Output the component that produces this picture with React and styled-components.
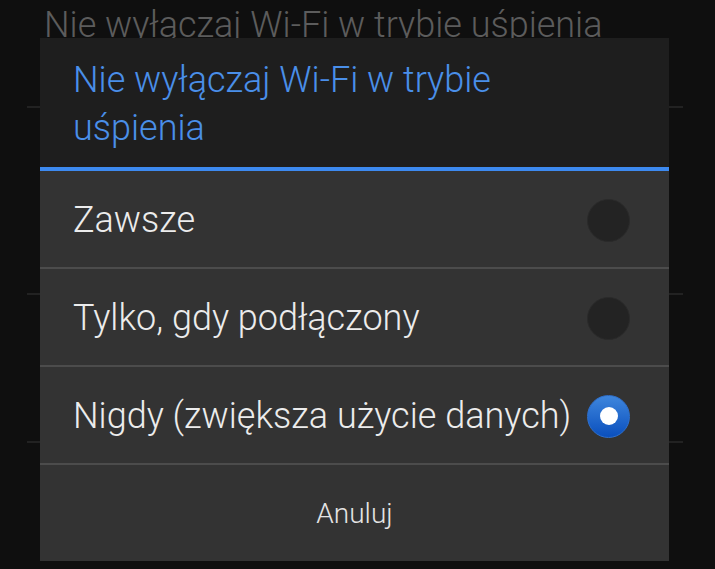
import React, { useState } from "react";
import styled, { createGlobalStyle } from "styled-components";

const Global = createGlobalStyle`
    html, body {
        margin: 0;
        padding: 0;
        background: #0f0f0f;
        font-family: Roboto, "Noto Sans", sans-serif;
    }
`;

const Screen = styled.div`
    position: relative;
    width: 715px;
    height: 569px;
    overflow: hidden;
    background: #0f0f0f;
`;

const BackList = styled.div`
    display: flex;
    flex-direction: column;
    margin-top: 1px;
`;

const BackTitle = styled.div`
    padding-left: 44px;
    font-size: 36px;
    font-weight: 300;
    line-height: 48px;
    color: #5c5c5c;
    white-space: nowrap;
`;

const BackRow = styled.div`
    height: ${(p) => p.$h}px;
    margin: 0 32px 0 27px;
    border-bottom: 2px solid #222;
`;

const Dialog = styled.div`
    position: absolute;
    top: 38px;
    left: 40px;
    width: 629px;
    display: flex;
    flex-direction: column;
    background: #333;
`;

const Header = styled.div`
    height: 133px;
    box-sizing: border-box;
    padding: 18px 33px 0;
    background: #1e1e1e;
    border-bottom: 4px solid #3d8af0;
    color: #4a8fe9;
    font-size: 36px;
    font-weight: 300;
    line-height: 48px;
`;

const Option = styled.label`
    height: 98px;
    display: flex;
    align-items: center;
    justify-content: space-between;
    padding: 2px 39px 0 33px;
    box-sizing: border-box;
    border-bottom: 2px solid #4c4c4c;
    color: #ececec;
    font-size: 36px;
    font-weight: 300;
    cursor: pointer;
`;

const Radio = styled.span`
    width: 43px;
    height: 43px;
    border-radius: 50%;
    flex-shrink: 0;
    display: flex;
    align-items: center;
    justify-content: center;
    box-sizing: border-box;
    background: ${(p) => p.$on ? "linear-gradient(#3e86dd, #0a4fbd)" : "#232323"};
    border: 1px solid ${(p) => p.$on ? "#2e6fcc" : "#2a2a2a"};

    &::after {
        content: "";
        display: ${(p) => p.$on ? "block" : "none"};
        width: 18px;
        height: 18px;
        border-radius: 50%;
        background: #fff;
    }
`;

const Cancel = styled.button`
    height: 96px;
    border: none;
    background: transparent;
    color: #e4e4e4;
    font-family: Roboto, sans-serif;
    font-size: 28px;
    font-weight: 300;
    cursor: pointer;

    &:focus {
        outline: none;
    }
`;

const options = ["Zawsze", "Tylko, gdy podłączony", "Nigdy (zwiększa użycie danych)"];

export default () => {
    const [selected, setSelected] = useState(2);

    return (
        <Screen>
            <Global />
            <BackList>
                <BackTitle>Nie wyłączaj Wi-Fi w trybie uśpienia</BackTitle>
                <BackRow $h={57} />
                <BackRow $h={185} />
                <BackRow $h={146} />
            </BackList>
            <Dialog>
                <Header>Nie wyłączaj Wi-Fi w trybie<br />uśpienia</Header>
                {options.map((o, i) => (
                    <Option key={o} onClick={() => setSelected(i)}>
                        {o}
                        <Radio $on={selected === i} />
                    </Option>
                ))}
                <Cancel>Anuluj</Cancel>
            </Dialog>
        </Screen>
    );
};
